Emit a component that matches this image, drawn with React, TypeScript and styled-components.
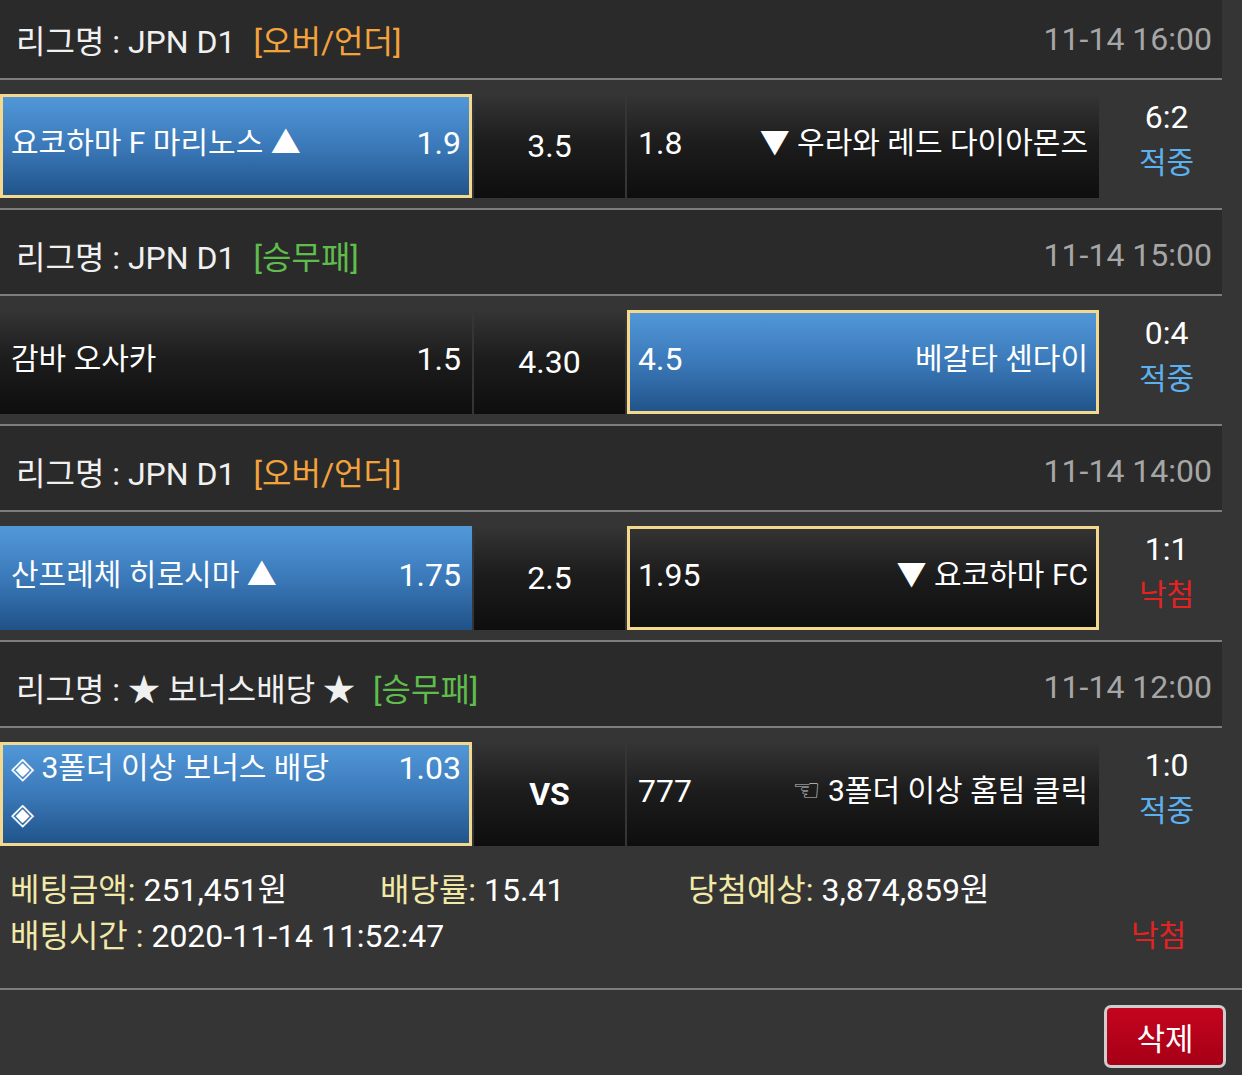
import React from "react";
import styled, { createGlobalStyle } from "styled-components";

type Side = {
  name: React.ReactNode;
  odds: string;
  win?: boolean;
  mine?: boolean;
};

type Match = {
  league: React.ReactNode;
  tag: string;
  tagColor: string;
  time: string;
  home: Side;
  draw: string;
  drawBold?: boolean;
  away: Side;
  score: string;
  hit: boolean;
};

const GlobalStyle = createGlobalStyle`
  html, body {
    margin: 0;
    padding: 0;
    background: #353535;
    font-family: Roboto, "Noto Sans CJK KR", sans-serif;
    color: #f2f2f2;
  }
  * { box-sizing: border-box; }
`;

const Page = styled.div`
  width: 1242px;
  margin-top: -6px;
  background: #353535;
`;

const Board = styled.div`
  width: 1222px;
`;

const LeagueBar = styled.div`
  height: 86px;
  padding: 6px 10px 0 16px;
  display: flex;
  align-items: center;
  justify-content: space-between;
  background: #2a2a2a;
  border-bottom: 2px solid #7d7d7d;
  font-size: 32px;
  color: #f0f0f0;
`;

const Tag = styled.span<{ $color: string }>`
  margin-left: 18px;
  color: ${(p) => p.$color};
`;

const Time = styled.span`
  color: #a6a6a6;
`;

const MatchRow = styled.div<{ $last?: boolean }>`
  height: ${(p) => (p.$last ? 128 : 130)}px;
  padding: 14px 0 10px;
  display: grid;
  grid-template-columns: 472px 151px 472px 1fr;
  grid-template-rows: 104px;
  column-gap: 2px;
  border-bottom: ${(p) => (p.$last ? "none" : "2px solid #7d7d7d")};
`;

const darkFill = "linear-gradient(to bottom, #353535 0%, #1d1d1d 45%, #0e0e0e 100%)";
const blueFill = "linear-gradient(to bottom, #5299da 0%, #3b79b9 50%, #1f5288 100%)";

const Cell = styled.div<{ $win?: boolean; $mine?: boolean }>`
  display: flex;
  align-items: center;
  padding: 0 11px 6px;
  background: ${(p) => (p.$win ? blueFill : darkFill)};
  box-shadow: ${(p) => (p.$mine ? "inset 0 0 0 3px #f4d88d" : "none")};
  color: #fff;
`;

const Pair = styled.div<{ $reverse?: boolean }>`
  flex: 1;
  display: grid;
  grid-template-columns: ${(p) => (p.$reverse ? "auto 1fr" : "1fr auto")};
  align-items: start;
  column-gap: 12px;
  line-height: 46px;
`;

const Name = styled.span<{ $right?: boolean }>`
  font-size: 30px;
  text-align: ${(p) => (p.$right ? "right" : "left")};
  white-space: nowrap;
`;

const Odds = styled.span`
  font-size: 32px;
`;

const Hand = styled.span`
  font-family: "DejaVu Sans", sans-serif;
  font-size: 32px;
  line-height: 1;
  color: #c4c4c4;
`;

const DrawCell = styled.div<{ $bold?: boolean }>`
  display: flex;
  align-items: center;
  justify-content: center;
  background: ${darkFill};
  font-size: 32px;
  font-weight: ${(p) => (p.$bold ? 700 : 400)};
  color: #fff;
`;

const Result = styled.div`
  display: flex;
  flex-direction: column;
  align-items: center;
  justify-content: flex-start;
  padding-left: 10px;
  line-height: 46px;
  font-size: 32px;
  color: #fff;
`;

const Status = styled.span<{ $hit: boolean }>`
  font-size: 30px;
  color: ${(p) => (p.$hit ? "#5db0ee" : "#e42222")};
  text-align: center;
`;

const Summary = styled.div`
  padding: 11px 23px 29px 10px;
  border-bottom: 2px solid #7d7d7d;
  font-size: 32px;
  line-height: 46px;
  color: #fff;
`;

const SummaryLine = styled.div`
  display: grid;
  grid-template-columns: 370px 308px auto;
`;

const SummaryFoot = styled.div`
  display: grid;
  grid-template-columns: 1fr 121px;
`;

const Label = styled.span`
  color: #f1e9a8;
`;

const Actions = styled.div`
  height: 85px;
  padding: 15px 16px 0;
  display: flex;
  justify-content: flex-end;
  align-items: flex-start;
`;

const DeleteButton = styled.button`
  width: 122px;
  height: 63px;
  border: 3px solid #cdcdcd;
  border-radius: 7px;
  background: linear-gradient(to bottom, #c4041f 0%, #a60016 100%);
  color: #fff;
  font-family: Roboto, "Noto Sans CJK KR", sans-serif;
  font-size: 31px;
  cursor: pointer;
`;

const matches: Match[] = [
  {
    league: "JPN D1",
    tag: "[오버/언더]",
    tagColor: "#f2a33c",
    time: "11-14 16:00",
    home: { name: "요코하마 F 마리노스 ▲", odds: "1.9", win: true, mine: true },
    draw: "3.5",
    away: { name: "▼ 우라와 레드 다이아몬즈", odds: "1.8" },
    score: "6:2",
    hit: true,
  },
  {
    league: "JPN D1",
    tag: "[승무패]",
    tagColor: "#5fbd4c",
    time: "11-14 15:00",
    home: { name: "감바 오사카", odds: "1.5" },
    draw: "4.30",
    away: { name: "베갈타 센다이", odds: "4.5", win: true, mine: true },
    score: "0:4",
    hit: true,
  },
  {
    league: "JPN D1",
    tag: "[오버/언더]",
    tagColor: "#f2a33c",
    time: "11-14 14:00",
    home: { name: "산프레체 히로시마 ▲", odds: "1.75", win: true },
    draw: "2.5",
    away: { name: "▼ 요코하마 FC", odds: "1.95", mine: true },
    score: "1:1",
    hit: false,
  },
  {
    league: "★ 보너스배당 ★",
    tag: "[승무패]",
    tagColor: "#5fbd4c",
    time: "11-14 12:00",
    home: {
      name: (
        <>
          ◈ 3폴더 이상 보너스 배당
          <br />◈
        </>
      ),
      odds: "1.03",
      win: true,
      mine: true,
    },
    draw: "VS",
    drawBold: true,
    away: {
      name: (
        <>
          <Hand>☜</Hand> 3폴더 이상 홈팀 클릭
        </>
      ),
      odds: "777",
    },
    score: "1:0",
    hit: true,
  },
];

export default function App() {
  return (
    <>
      <GlobalStyle />
      <Page>
        <Board>
          {matches.map((m, idx) => (
            <section key={idx}>
              <LeagueBar>
                <span>
                  리그명 : {m.league}
                  <Tag $color={m.tagColor}>{m.tag}</Tag>
                </span>
                <Time>{m.time}</Time>
              </LeagueBar>
              <MatchRow $last={idx === matches.length - 1}>
                <Cell $win={m.home.win} $mine={m.home.mine}>
                  <Pair>
                    <Name>{m.home.name}</Name>
                    <Odds>{m.home.odds}</Odds>
                  </Pair>
                </Cell>
                <DrawCell $bold={m.drawBold}>{m.draw}</DrawCell>
                <Cell $win={m.away.win} $mine={m.away.mine}>
                  <Pair $reverse>
                    <Odds>{m.away.odds}</Odds>
                    <Name $right>{m.away.name}</Name>
                  </Pair>
                </Cell>
                <Result>
                  <span>{m.score}</span>
                  <Status $hit={m.hit}>{m.hit ? "적중" : "낙첨"}</Status>
                </Result>
              </MatchRow>
            </section>
          ))}
        </Board>
        <Summary>
          <SummaryLine>
            <span>
              <Label>베팅금액:</Label> 251,451원
            </span>
            <span>
              <Label>배당률:</Label> 15.41
            </span>
            <span>
              <Label>당첨예상:</Label> 3,874,859원
            </span>
          </SummaryLine>
          <SummaryFoot>
            <span>
              <Label>배팅시간 :</Label> 2020-11-14 11:52:47
            </span>
            <Status $hit={false}>낙첨</Status>
          </SummaryFoot>
        </Summary>
        <Actions>
          <DeleteButton type="button">삭제</DeleteButton>
        </Actions>
      </Page>
    </>
  );
}
